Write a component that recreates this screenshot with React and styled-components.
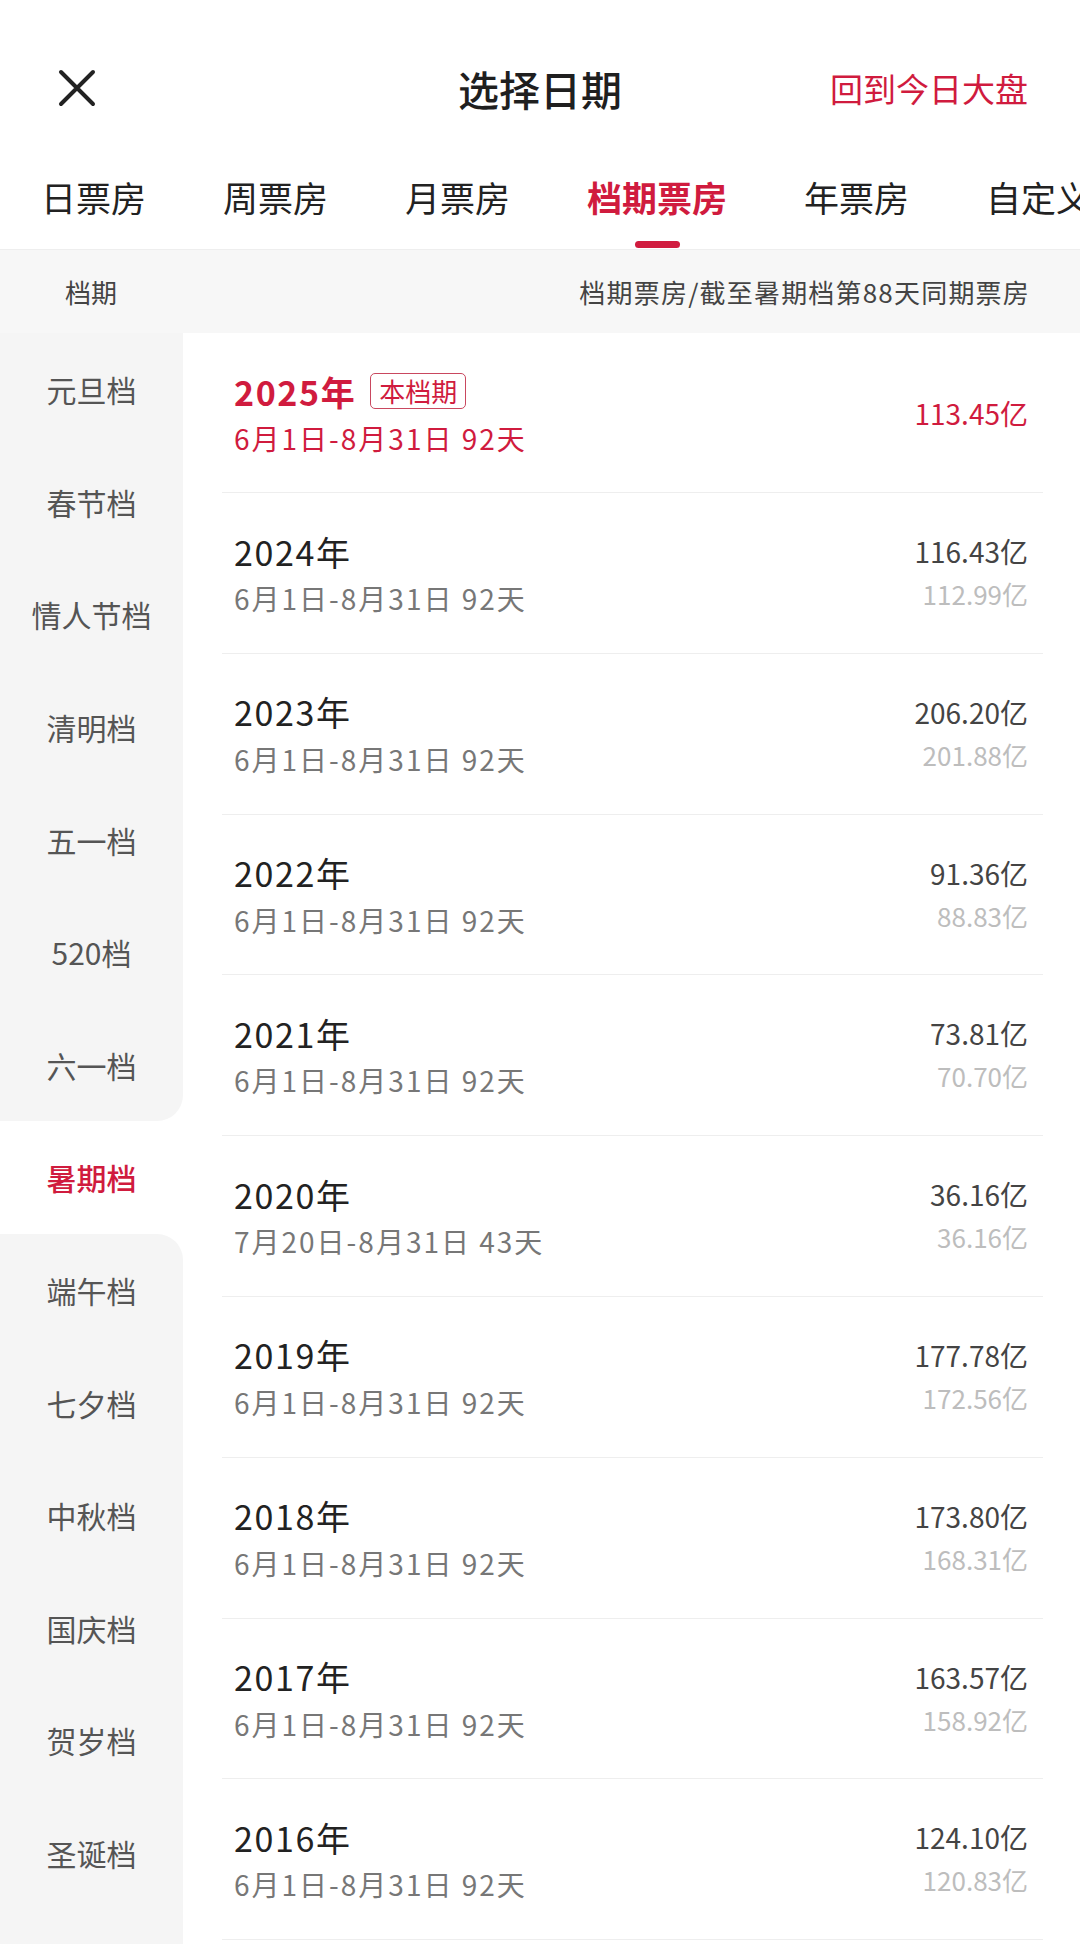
import styled, { createGlobalStyle } from "styled-components";

const GlobalStyle = createGlobalStyle`
  body {
    margin: 0;
    font-family: "Noto Sans CJK SC", "Noto Sans", sans-serif;
    background: #fff;
  }
`;

const RED = "#d01b3e";

const Page = styled.div`
  width: 1080px;
  height: 1944px;
  overflow: hidden;
  background: #fff;
  display: flex;
  flex-direction: column;
`;

const NavBar = styled.div`
  height: 171px;
  display: flex;
  align-items: center;
  justify-content: space-between;
  padding: 4px 52px 0 58px;
  box-sizing: border-box;
  position: relative;
`;

const CloseButton = styled.button`
  border: none;
  background: transparent;
  padding: 0;
  width: 38px;
  height: 38px;
  display: flex;
  cursor: pointer;
`;

const Title = styled.h1`
  position: absolute;
  left: 0;
  right: 0;
  margin: 0;
  text-align: center;
  font-size: 41px;
  font-weight: 500;
  color: #1f1f1f;
  pointer-events: none;
`;

const BackLink = styled.span`
  font-size: 33px;
  color: ${RED};
`;

const TabBar = styled.div`
  height: 78px;
  display: flex;
  gap: 77px;
  padding-left: 41px;
  white-space: nowrap;
  overflow: hidden;
  border-bottom: 1px solid #eeeeee;
`;

const Tab = styled.div`
  position: relative;
  height: 100%;
  font-size: 35px;
  line-height: 52px;
  color: ${(p) => (p.active ? RED : "#222")};
  font-weight: ${(p) => (p.active ? 700 : 400)};
  flex-shrink: 0;
`;

const TabLine = styled.span`
  position: absolute;
  top: 70px;
  left: 50%;
  width: 45px;
  height: 7px;
  margin-left: -22px;
  border-radius: 4px;
  background: ${RED};
`;

const HeaderBar = styled.div`
  height: 83px;
  background: #f7f7f7;
  display: flex;
  align-items: center;
  justify-content: space-between;
  padding: 0 50px 0 65px;
  font-size: 26px;
  color: #444;
`;

const HeaderNote = styled.span`
  letter-spacing: 1.2px;
`;

const Body = styled.div`
  flex: 1;
  display: flex;
  min-height: 0;
`;

const Sidebar = styled.div`
  width: 183px;
  flex-shrink: 0;
  background: #fff;
  display: flex;
  flex-direction: column;
`;

const SideItem = styled.div`
  height: 112.6px;
  flex-shrink: 0;
  display: flex;
  align-items: center;
  justify-content: center;
  font-size: 30px;
  color: ${(p) => (p.active ? RED : "#555")};
  font-weight: ${(p) => (p.active ? 500 : 400)};
  background: ${(p) => (p.active ? "#fff" : "#f5f5f5")};
  border-bottom-right-radius: ${(p) => (p.beforeActive ? "26px" : "0")};
  border-top-right-radius: ${(p) => (p.afterActive ? "26px" : "0")};
`;

const SideFiller = styled.div`
  flex: 1;
  background: #f5f5f5;
`;

const List = styled.div`
  flex: 1;
  padding: 0 37px 0 39px;
`;

const Row = styled.div`
  height: ${(p) => (p.first ? "160px" : "160.8px")};
  box-sizing: border-box;
  border-bottom: 1px solid #eeeeee;
  display: flex;
  justify-content: space-between;
  padding: 0 15px 0 12px;
`;

const Info = styled.div`
  padding-top: 36px;
  display: flex;
  flex-direction: column;
`;

const YearLine = styled.div`
  display: flex;
  align-items: center;
  gap: 14px;
  height: 44px;
`;

const Year = styled.span`
  font-size: 34px;
  letter-spacing: 1.6px;
  color: ${(p) => (p.current ? RED : "#222")};
  font-weight: ${(p) => (p.current ? 700 : 400)};
`;

const Badge = styled.span`
  font-size: 26px;
  line-height: 34px;
  padding: 0 8px;
  border: 1.5px solid #c9485f;
  border-radius: 5px;
  color: ${RED};
`;

const Dates = styled.div`
  margin-top: 5px;
  font-size: 28px;
  line-height: 40px;
  letter-spacing: 2px;
  color: ${(p) => (p.current ? RED : "#777")};
`;

const Amounts = styled.div`
  padding-top: ${(p) => (p.single ? "60px" : "38px")};
  display: flex;
  flex-direction: column;
  align-items: flex-end;
`;

const Amount = styled.div`
  font-size: 28px;
  line-height: 40px;
  color: ${(p) => (p.current ? RED : "#444")};
`;

const SubAmount = styled.div`
  margin-top: 3px;
  font-size: 26px;
  line-height: 40px;
  color: #bdbdbd;
`;

const tabs = ["日票房", "周票房", "月票房", "档期票房", "年票房", "自定义"];

const seasons = [
  "元旦档",
  "春节档",
  "情人节档",
  "清明档",
  "五一档",
  "520档",
  "六一档",
  "暑期档",
  "端午档",
  "七夕档",
  "中秋档",
  "国庆档",
  "贺岁档",
  "圣诞档",
];

const activeSeason = 7;

const rows = [
  { year: "2025年", dates: "6月1日-8月31日 92天", total: "113.45亿", current: true },
  { year: "2024年", dates: "6月1日-8月31日 92天", total: "116.43亿", same: "112.99亿" },
  { year: "2023年", dates: "6月1日-8月31日 92天", total: "206.20亿", same: "201.88亿" },
  { year: "2022年", dates: "6月1日-8月31日 92天", total: "91.36亿", same: "88.83亿" },
  { year: "2021年", dates: "6月1日-8月31日 92天", total: "73.81亿", same: "70.70亿" },
  { year: "2020年", dates: "7月20日-8月31日 43天", total: "36.16亿", same: "36.16亿" },
  { year: "2019年", dates: "6月1日-8月31日 92天", total: "177.78亿", same: "172.56亿" },
  { year: "2018年", dates: "6月1日-8月31日 92天", total: "173.80亿", same: "168.31亿" },
  { year: "2017年", dates: "6月1日-8月31日 92天", total: "163.57亿", same: "158.92亿" },
  { year: "2016年", dates: "6月1日-8月31日 92天", total: "124.10亿", same: "120.83亿" },
];

function App() {
  return (
    <>
      <GlobalStyle />
      <Page>
        <NavBar>
          <CloseButton aria-label="close">
            <svg width="38" height="38" viewBox="0 0 38 38">
              <path
                d="M3 3 L35 35 M35 3 L3 35"
                stroke="#222"
                strokeWidth="4"
                strokeLinecap="round"
              />
            </svg>
          </CloseButton>
          <Title>选择日期</Title>
          <BackLink>回到今日大盘</BackLink>
        </NavBar>

        <TabBar>
          {tabs.map((t) => (
            <Tab key={t} active={t === "档期票房"}>
              {t}
              {t === "档期票房" && <TabLine />}
            </Tab>
          ))}
        </TabBar>

        <HeaderBar>
          <span>档期</span>
          <HeaderNote>档期票房/截至暑期档第88天同期票房</HeaderNote>
        </HeaderBar>

        <Body>
          <Sidebar>
            {seasons.map((s, i) => (
              <SideItem
                key={s}
                active={i === activeSeason}
                beforeActive={i === activeSeason - 1}
                afterActive={i === activeSeason + 1}
              >
                {s}
              </SideItem>
            ))}
            <SideFiller />
          </Sidebar>

          <List>
            {rows.map((r, i) => (
              <Row key={r.year} first={i === 0}>
                <Info>
                  <YearLine>
                    <Year current={r.current}>{r.year}</Year>
                    {r.current && <Badge>本档期</Badge>}
                  </YearLine>
                  <Dates current={r.current}>{r.dates}</Dates>
                </Info>
                <Amounts single={!r.same}>
                  <Amount current={r.current}>{r.total}</Amount>
                  {r.same && <SubAmount>{r.same}</SubAmount>}
                </Amounts>
              </Row>
            ))}
          </List>
        </Body>
      </Page>
    </>
  );
}

export default App;
